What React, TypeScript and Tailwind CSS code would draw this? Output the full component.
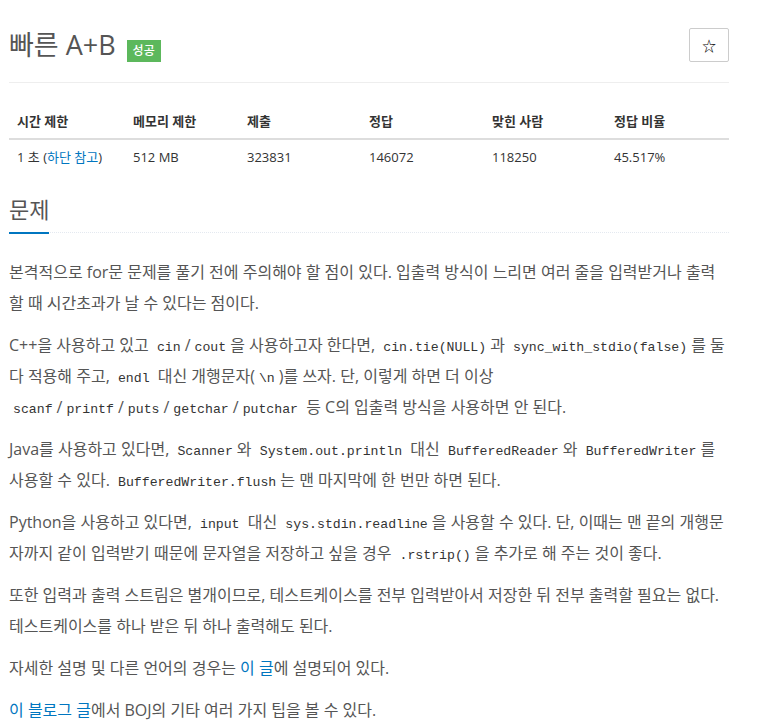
import { ReactNode } from 'react';

const FONT = '"Open Sans", "Noto Sans CJK KR", sans-serif';

function Code({ children }: { children: ReactNode }) {
  return (
    <code
      className="px-1 text-[13.2px] leading-none text-[#333]"
      style={{ fontFamily: '"Liberation Mono", "DejaVu Sans Mono", monospace' }}
    >
      {children}
    </code>
  );
}

function Link({ children }: { children: ReactNode }) {
  return <span className="text-[#0076c0]">{children}</span>;
}

const stats = [
  { label: '시간 제한', w: 'w-[116px]' },
  { label: '메모리 제한', w: 'w-[114px]' },
  { label: '제출', w: 'w-[122px]' },
  { label: '정답', w: 'w-[123px]' },
  { label: '맞힌 사람', w: 'w-[122px]' },
  { label: '정답 비율', w: 'w-[123px]' },
];

export default function App() {
  return (
    <div className="min-h-screen bg-white" style={{ fontFamily: FONT }}>
      <div className="ml-[9px] w-[720px]">
        {/* title */}
        <div className="flex items-start justify-between pt-[28px]">
          <h1 className="flex items-start">
            <span className="text-[27px] leading-[34px] text-[#555]">빠른 A+B</span>
            <span className="ml-[11px] mt-[12px] flex h-[22px] w-[34px] items-center justify-center bg-[#5cb85c] text-[12px] font-medium text-white">
              성공
            </span>
          </h1>
          <button
            type="button"
            className="flex h-[34px] w-[40px] items-center justify-center rounded-[2px] border border-[#ccc] text-[14px] text-black"
          >
            ☆
          </button>
        </div>
        <div className="mt-[20px] border-t border-[#eee]" />

        {/* stats table */}
        <table className="mt-[21px] w-full table-fixed border-collapse text-[13px] text-[#333]">
          <thead>
            <tr>
              {stats.map((s) => (
                <th
                  key={s.label}
                  className={`${s.w} border-b-2 border-[#ddd] px-2 py-2 text-left font-bold leading-[18px]`}
                >
                  {s.label}
                </th>
              ))}
            </tr>
          </thead>
          <tbody>
            <tr>
              <td className="px-2 py-2 leading-[18px]">
                1 초 (<Link>하단 참고</Link>)
              </td>
              <td className="px-2 py-2 leading-[18px]">512 MB</td>
              <td className="px-2 py-2 leading-[18px]">323831</td>
              <td className="px-2 py-2 leading-[18px]">146072</td>
              <td className="px-2 py-2 leading-[18px]">118250</td>
              <td className="px-2 py-2 leading-[18px]">45.517%</td>
            </tr>
          </tbody>
        </table>

        {/* headline */}
        <div className="mt-[20px] border-b border-dotted border-[#e4e9f0]">
          <h2 className="mb-[-2px] inline-block border-b-2 border-[#0076c0] pb-[8px] text-[22px] leading-[30px] text-[#555]">
            문제
          </h2>
        </div>

        {/* description */}
        <div className="mt-[24px] text-[16px] leading-[31px] text-[#555]">
          <p className="mb-[11px]">
            본격적으로 for문 문제를 풀기 전에 주의해야 할 점이 있다. 입출력 방식이 느리면 여러 줄을 입력받거나 출력할 때 시간초과가 날 수 있다는 점이다.
          </p>
          <p className="mb-[11px]">
            C++을 사용하고 있고 <Code>cin</Code>/<Code>cout</Code>을 사용하고자 한다면, <Code>cin.tie(NULL)</Code>과{' '}
            <Code>sync_with_stdio(false)</Code>를 둘 다 적용해 주고, <Code>endl</Code> 대신 개행문자(<Code>\n</Code>)를 쓰자. 단, 이렇게 하면 더 이상{' '}
            <Code>scanf</Code>/<Code>printf</Code>/<Code>puts</Code>/<Code>getchar</Code>/<Code>putchar</Code> 등 C의 입출력 방식을 사용하면 안 된다.
          </p>
          <p className="mb-[11px]">
            Java를 사용하고 있다면, <Code>Scanner</Code>와 <Code>System.out.println</Code> 대신 <Code>BufferedReader</Code>와{' '}
            <Code>BufferedWriter</Code>를 사용할 수 있다. <Code>BufferedWriter.flush</Code>는 맨 마지막에 한 번만 하면 된다.
          </p>
          <p className="mb-[11px]">
            Python을 사용하고 있다면, <Code>input</Code> 대신 <Code>sys.stdin.readline</Code>을 사용할 수 있다. 단, 이때는 맨 끝의 개행문자까지 같이 입력받기 때문에 문자열을 저장하고 싶을 경우{' '}
            <Code>.rstrip()</Code>을 추가로 해 주는 것이 좋다.
          </p>
          <p className="mb-[11px]">
            또한 입력과 출력 스트림은 별개이므로, 테스트케이스를 전부 입력받아서 저장한 뒤 전부 출력할 필요는 없다. 테스트케이스를 하나 받은 뒤 하나 출력해도 된다.
          </p>
          <p className="mb-[11px]">
            자세한 설명 및 다른 언어의 경우는 <Link>이 글</Link>에 설명되어 있다.
          </p>
          <p className="mb-[11px]">
            <Link>이 블로그 글</Link>에서 BOJ의 기타 여러 가지 팁을 볼 수 있다.
          </p>
        </div>
      </div>
    </div>
  );
}
